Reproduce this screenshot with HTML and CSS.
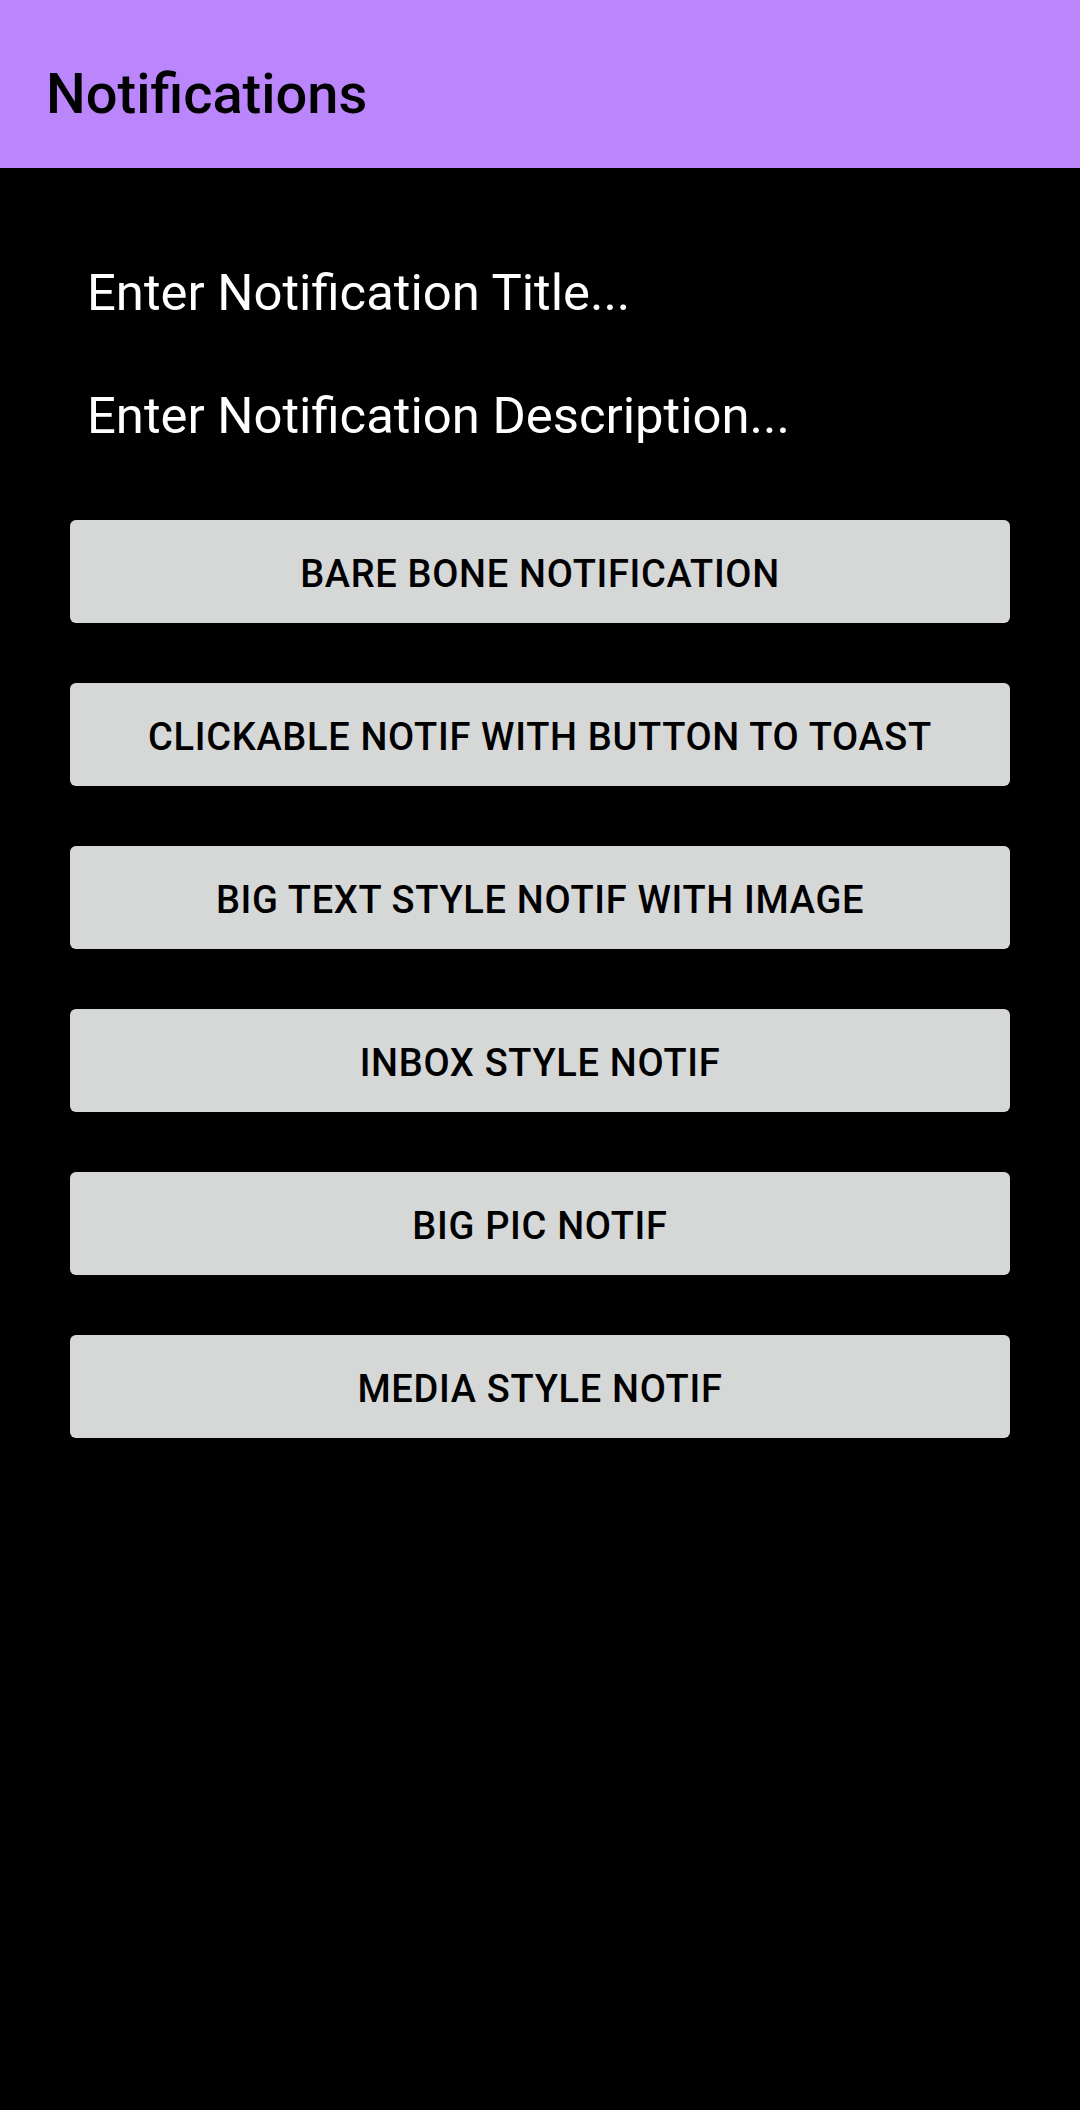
FILE: index.html
```html
<!DOCTYPE html>
<html>
<head>
<meta charset="utf-8">
<link rel="stylesheet" href="styles.css">
</head>
<body>
<header class="appbar"><h1 class="appbar-title">Notifications</h1></header>
<main class="content">
  <div class="fields">
    <div class="field">Enter Notification Title...</div>
    <div class="field">Enter Notification Description...</div>
  </div>
  <div class="buttons">
    <button class="btn">BARE BONE NOTIFICATION</button>
    <button class="btn">CLICKABLE NOTIF WITH BUTTON TO TOAST</button>
    <button class="btn">BIG TEXT STYLE NOTIF WITH IMAGE</button>
    <button class="btn">INBOX STYLE NOTIF</button>
    <button class="btn">BIG PIC NOTIF</button>
    <button class="btn">MEDIA STYLE NOTIF</button>
  </div>
</main>
</body>
</html>
```
FILE: styles.css
```css
html, body {
  margin: 0;
  padding: 0;
  background: #000;
  font-family: Roboto, "Noto Sans", sans-serif;
}
body {
  width: 1080px;
  min-height: 2110px;
}
.appbar {
  box-sizing: border-box;
  height: 168px;
  padding: 61px 0 0 46px;
  background: #bb86fc;
}
.appbar-title {
  margin: 0;
  font-size: 56px;
  font-weight: 500;
  line-height: 66px;
  color: #000;
}
.content {
  padding: 95px 70px 0 70px;
}
.fields {
  display: flex;
  flex-direction: column;
  gap: 63px;
  padding-left: 17px;
}
.field {
  font-size: 50.8px;
  line-height: 60px;
  color: #fff;
}
.buttons {
  display: flex;
  flex-direction: column;
  gap: 60px;
  margin-top: 74px;
}
.btn {
  box-sizing: border-box;
  height: 103px;
  width: 100%;
  padding: 5px 0 0 0;
  border: 0;
  border-radius: 6px;
  background: #d6d7d7;
  color: #000;
  font-family: Roboto, "Noto Sans", sans-serif;
  font-size: 38px;
  font-weight: 500;
  letter-spacing: 0.018em;
  display: flex;
  align-items: center;
  justify-content: center;
}
```
